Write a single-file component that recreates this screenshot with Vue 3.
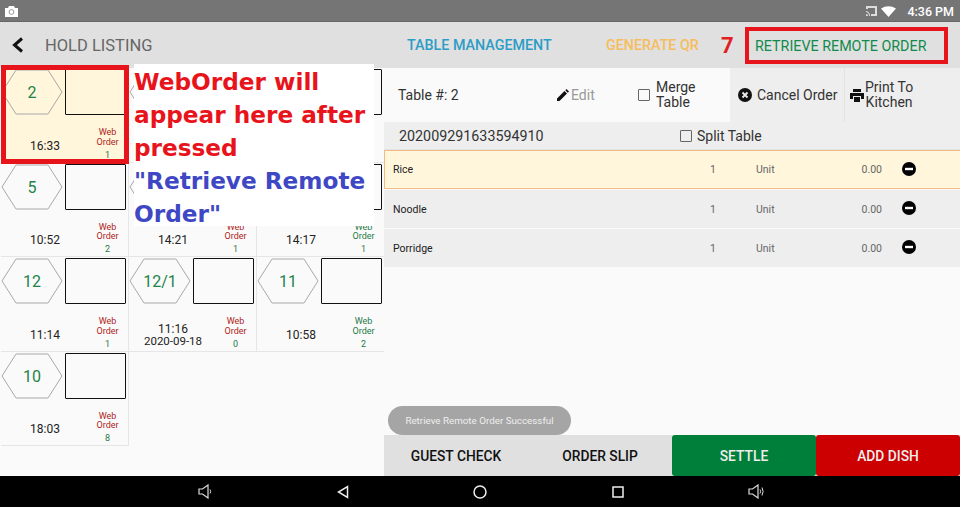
<script setup>
const tables = [
  { name: '2', time: '16:33', count: 1, web: 'red', selected: true },
  { name: '', covered: true },
  { name: '', covered: true },
  { name: '5', time: '10:52', count: 2, web: 'red' },
  { name: '', time: '14:21', count: 1, web: 'red' },
  { name: '', time: '14:17', count: 1, web: 'green' },
  { name: '12', time: '11:14', count: 1, web: 'red' },
  { name: '12/1', time: '11:16', date: '2020-09-18', count: 0, web: 'red' },
  { name: '11', time: '10:58', count: 2, web: 'green' },
  { name: '10', time: '18:03', count: 8, web: 'red' }
]

const items = [
  { name: 'Rice', selected: true },
  { name: 'Noodle' },
  { name: 'Porridge' }
]
</script>

<template>
  <div class="screen">
    <div class="status">
      <svg class="camera" width="13" height="11" viewBox="0 0 13 11">
        <path d="M0 2h3l1-2h5l1 2h3v9H0z" fill="#fff" />
        <circle cx="6.5" cy="6" r="2.4" fill="none" stroke="#999" />
      </svg>
      <div class="status-right">
        <svg width="11" height="10" viewBox="0 0 11 10">
          <path d="M0 0h11v10H5V8h4V2H2v1H0z" fill="#ddd" />
          <path d="M0 5a5 5 0 0 1 4 5H3a4 4 0 0 0-3-4zM0 8a2 2 0 0 1 2 2H0z" fill="#ddd" />
        </svg>
        <svg class="wifi" width="15" height="11" viewBox="0 0 15 11">
          <path d="M0 2.5Q7.500 -2 15 2.500L7.500 11z" fill="#fff" />
        </svg>
        <span class="clock">4:36 PM</span>
      </div>
    </div>

    <div class="header">
      <div class="header-left">
        <svg width="13" height="16" viewBox="0 0 13 16">
          <path d="M11 1.500 3.500 8l7.500 6.500" fill="none" stroke="#111" stroke-width="3" />
        </svg>
        <span class="title">HOLD LISTING</span>
      </div>
      <div class="header-right">
        <span class="link blue">TABLE MANAGEMENT</span>
        <span class="link amber">GENERATE QR</span>
        <span class="seven">7</span>
        <span class="retrieve">RETRIEVE REMOTE ORDER</span>
      </div>
    </div>

    <div class="main">
      <div class="listing">
        <div class="grid">
          <div v-for="(t, i) in tables" :key="i" class="card" :class="{ selected: t.selected }">
            <div class="card-top">
              <svg class="hex" width="62" height="46" viewBox="0 0 62 46">
                <path d="M1 23 15 1h32l14 22-14 22H15z" fill="none" stroke="#a9a9a9" />
                <text v-if="t.name" x="31" y="29" text-anchor="middle" class="hex-text">{{ t.name }}</text>
              </svg>
              <div class="box"></div>
            </div>
            <div v-if="!t.covered" class="card-bottom">
              <div class="time">
                <div>{{ t.time }}</div>
                <div v-if="t.date" class="date">{{ t.date }}</div>
              </div>
              <div class="web" :class="t.web">
                <div>Web</div>
                <div>Order</div>
                <div class="count">{{ t.count }}</div>
              </div>
            </div>
          </div>
        </div>
        <div class="red-frame"></div>
        <div class="note">
          <div class="note-red">WebOrder will appear here after pressed</div>
          <div class="note-blue">"Retrieve Remote Order"</div>
        </div>
      </div>

      <div class="order">
        <div class="toolbar">
          <div class="table-no">Table #: 2</div>
          <div class="edit">
            <svg width="12" height="12" viewBox="0 0 12 12">
              <path d="M0 12V9.500L7.500 2 10 4.500 2.500 12zM8.300 1.200 9.500 0 12 2.500l-1.200 1.200z" fill="#111" />
            </svg>
            <span>Edit</span>
          </div>
          <div class="merge">
            <span class="check"></span>
            <span>Merge<br />Table</span>
          </div>
          <div class="tool cancel">
            <svg width="14" height="14" viewBox="0 0 14 14">
              <circle cx="7" cy="7" r="7" fill="#111" />
              <path d="M4.500 4.500l5 5M9.500 4.500l-5 5" stroke="#eee" stroke-width="1.800" />
            </svg>
            <span>Cancel Order</span>
          </div>
          <div class="tool print">
            <svg width="14" height="13" viewBox="0 0 14 13">
              <path d="M3 0h8v3H3zM0 4h14v6h-3V7H3v3H0zM4 8h6v5H4z" fill="#111" />
            </svg>
            <span class="print-text">Print To<br />Kitchen</span>
          </div>
        </div>

        <div class="order-no">
          <span class="number">202009291633594910</span>
          <span class="split"><span class="check small"></span>Split Table</span>
        </div>

        <div class="rows">
          <div v-for="item in items" :key="item.name" class="row" :class="{ selected: item.selected }">
            <span class="item-name">{{ item.name }}</span>
            <span class="qty">1</span>
            <span class="unit">Unit</span>
            <span class="price">0.00</span>
            <svg class="minus" width="14" height="14" viewBox="0 0 14 14">
              <circle cx="7" cy="7" r="7" fill="#000" />
              <rect x="3" y="5.800" width="8" height="2.400" fill="#fff" />
            </svg>
          </div>
        </div>

        <div class="toast">Retrieve Remote Order Successful</div>

        <div class="actions">
          <button class="action">GUEST CHECK</button>
          <button class="action">ORDER SLIP</button>
          <button class="action settle">SETTLE</button>
          <button class="action add">ADD DISH</button>
        </div>
      </div>
    </div>

    <div class="nav">
      <svg width="14" height="15" viewBox="0 0 14 15">
        <path d="M1 5h3.500L10 1v13l-5.500-4H1z" fill="none" stroke="#ddd" stroke-width="1.200" />
        <path d="M12 5.500q1.300 2 0 4" fill="none" stroke="#ddd" />
      </svg>
      <svg width="12" height="14" viewBox="0 0 12 14">
        <path d="M10.500 1.500v11L1.500 7z" fill="none" stroke="#eee" stroke-width="1.500" />
      </svg>
      <svg width="14" height="14" viewBox="0 0 14 14">
        <circle cx="7" cy="7" r="6" fill="none" stroke="#eee" stroke-width="1.500" />
      </svg>
      <svg width="12" height="12" viewBox="0 0 12 12">
        <rect x="1" y="1" width="10" height="10" fill="none" stroke="#eee" stroke-width="1.500" />
      </svg>
      <svg width="16" height="15" viewBox="0 0 16 15">
        <path d="M1 5h3.500L10 1v13l-5.500-4H1z" fill="none" stroke="#ddd" stroke-width="1.200" />
        <path d="M12 5.500q1.300 2 0 4M14 3.500q2.200 4 0 8" fill="none" stroke="#ddd" />
      </svg>
    </div>
  </div>
</template>

<style scoped>
.screen {
  width: 960px;
  height: 507px;
  display: flex;
  flex-direction: column;
  overflow: hidden;
  font-family: Roboto, sans-serif;
  background: #fafafa;
}

.status {
  height: 22px;
  background: #757575;
  display: flex;
  align-items: center;
  justify-content: space-between;
  padding: 0 6px 0 5px;
  box-shadow: inset 0 -1px 0 #666;
}

.status-right {
  display: flex;
  align-items: center;
  gap: 4px;
}

.wifi {
  margin-right: 7px;
}

.clock {
  color: #fff;
  font-size: 12.500px;
  font-weight: 500;
}

.header {
  height: 46px;
  background: #e0e0e0;
  display: flex;
  align-items: center;
}

.header-left {
  width: 384px;
  display: flex;
  align-items: center;
  gap: 21px;
  padding-left: 11px;
  box-sizing: border-box;
}

.title {
  font-size: 16.500px;
  color: #666;
}

.header-right {
  flex: 1;
  display: flex;
  align-items: center;
  font-size: 14.300px;
  font-weight: 500;
}

.link.blue {
  color: #2b9dc6;
  margin-left: 23px;
  width: 199px;
}

.link.amber {
  color: #f6bd5c;
  width: 115px;
}

.seven {
  color: #e02020;
  font-size: 22px;
  font-weight: 700;
  width: 24px;
}

.retrieve {
  width: 203px;
  height: 37px;
  box-sizing: border-box;
  border: 4px solid #e8141c;
  margin-top: 1px;
  padding-left: 6px;
  color: #0f8a4c;
  font-weight: 400;
  font-size: 14.300px;
  white-space: nowrap;
  display: flex;
  align-items: center;
}

.main {
  flex: 1;
  display: flex;
  min-height: 0;
}

.listing {
  width: 384px;
  position: relative;
  background: #fafafa;
}

.grid {
  display: grid;
  grid-template-columns: repeat(3, 128px);
  grid-auto-rows: 94.500px;
  padding-left: 1px;
}

.card {
  display: flex;
  flex-direction: column;
  box-sizing: border-box;
  padding: 1px 2px 0 0;
  border-right: 1px solid #e6e6e6;
  border-bottom: 1px solid #e6e6e6;
}

.card.selected {
  background: #fff6dc;
}

.card-top {
  display: flex;
  justify-content: space-between;
  height: 46px;
}

.hex-text {
  font-size: 16px;
  fill: #1e8449;
}

.box {
  width: 61px;
  height: 46px;
  box-sizing: border-box;
  border: 1px solid #111;
  border-radius: 1px;
}

.card-bottom {
  flex: 1;
  display: flex;
}

.time {
  width: 88px;
  display: flex;
  flex-direction: column;
  justify-content: center;
  align-items: center;
  padding-top: 15px;
  font-size: 12px;
  line-height: 12px;
  color: #222;
  box-sizing: border-box;
}

.date {
  font-size: 11.500px;
}

.web {
  flex: 1;
  text-align: center;
  font-size: 9px;
  line-height: 9.500px;
  padding-top: 13px;
}

.web.red {
  color: #b01c20;
}

.web.green {
  color: #1e7a46;
}

.count {
  color: #1e7a46;
  margin-top: 3.500px;
}

.red-frame {
  position: absolute;
  left: 1px;
  top: -3px;
  width: 128px;
  height: 99px;
  box-sizing: border-box;
  border: 5px solid #e8141c;
}

.note {
  position: absolute;
  left: 134px;
  top: -4px;
  width: 240px;
  height: 162px;
  padding-top: 1px;
  box-sizing: border-box;
  background: #fff;
  font-family: "DejaVu Sans", sans-serif;
  font-weight: 700;
  font-size: 23.200px;
  line-height: 33px;
}

.note-red {
  color: #e8141c;
}

.note-blue {
  color: #3f48c4;
}

.order {
  flex: 1;
  position: relative;
  display: flex;
  flex-direction: column;
  background: #fafafa;
}

.toolbar {
  height: 54px;
  display: flex;
  align-items: center;
  font-size: 14px;
  color: #333;
}

.table-no {
  width: 173px;
  padding-left: 14px;
  box-sizing: border-box;
}

.edit {
  width: 81px;
  display: flex;
  align-items: center;
  gap: 2px;
  color: #999;
}

.merge {
  width: 92px;
  display: flex;
  align-items: center;
  gap: 6px;
  line-height: 15px;
}

.check {
  width: 10px;
  height: 10px;
  border: 1px solid #666;
  display: inline-block;
  border-radius: 1px;
}

.tool {
  height: 100%;
  background: #eee;
  display: flex;
  align-items: center;
  box-sizing: border-box;
}

.cancel {
  width: 115px;
  gap: 5px;
  padding-left: 8px;
  border-right: 1px solid #e3e3e3;
  white-space: nowrap;
}

.print {
  flex: 1;
  gap: 1px;
  padding-left: 5px;
  line-height: 15px;
}

.print-text {
  text-align: center;
}

.order-no {
  height: 28px;
  background: #eee;
  display: flex;
  align-items: center;
  font-size: 14.300px;
  color: #333;
  border-bottom: 1px solid #e2e2e2;
  box-sizing: border-box;
}

.number {
  width: 296px;
  padding-left: 15px;
  box-sizing: border-box;
}

.split {
  display: flex;
  align-items: center;
  gap: 5px;
  font-size: 14px;
}

.rows {
  display: flex;
  flex-direction: column;
  gap: 1px;
}

.row {
  height: 38px;
  background: #eee;
  display: flex;
  align-items: center;
  font-size: 10.500px;
  color: #666;
  box-sizing: border-box;
}

.row.selected {
  background: #fff6dc;
  box-shadow: inset 1px 1px 0 #eebd8a, inset 0 -1px 0 #eebd8a;
  height: 39px;
}

.item-name {
  width: 326px;
  padding-left: 9px;
  box-sizing: border-box;
  color: #222;
}

.qty {
  width: 46px;
}

.unit {
  width: 86px;
}

.price {
  width: 40px;
  text-align: right;
}

.minus {
  margin-left: 20px;
  margin-top: -2px;
}

.toast {
  position: absolute;
  left: 4px;
  top: 338px;
  width: 183px;
  height: 29px;
  border-radius: 15px;
  background: #a5a5a5;
  color: #eee;
  font-size: 9.800px;
  display: flex;
  align-items: center;
  justify-content: center;
}

.actions {
  margin-top: auto;
  height: 41px;
  display: grid;
  grid-template-columns: repeat(4, 1fr);
  background: #e0e0e0;
}

.action {
  border: none;
  background: none;
  padding: 0;
  font-family: Roboto, sans-serif;
  font-size: 13.800px;
  font-weight: 500;
  color: #111;
}

.settle {
  background: #007f3a;
  color: #eee;
  border-radius: 3px;
}

.add {
  background: #cc0000;
  color: #eee;
  border-radius: 3px;
}

.nav {
  height: 31px;
  background: #000;
  display: flex;
  align-items: center;
  padding-left: 198px;
  gap: 124.500px;
}
</style>

<style>
html,
body {
  margin: 0;
  background: #fafafa;
}
</style>
